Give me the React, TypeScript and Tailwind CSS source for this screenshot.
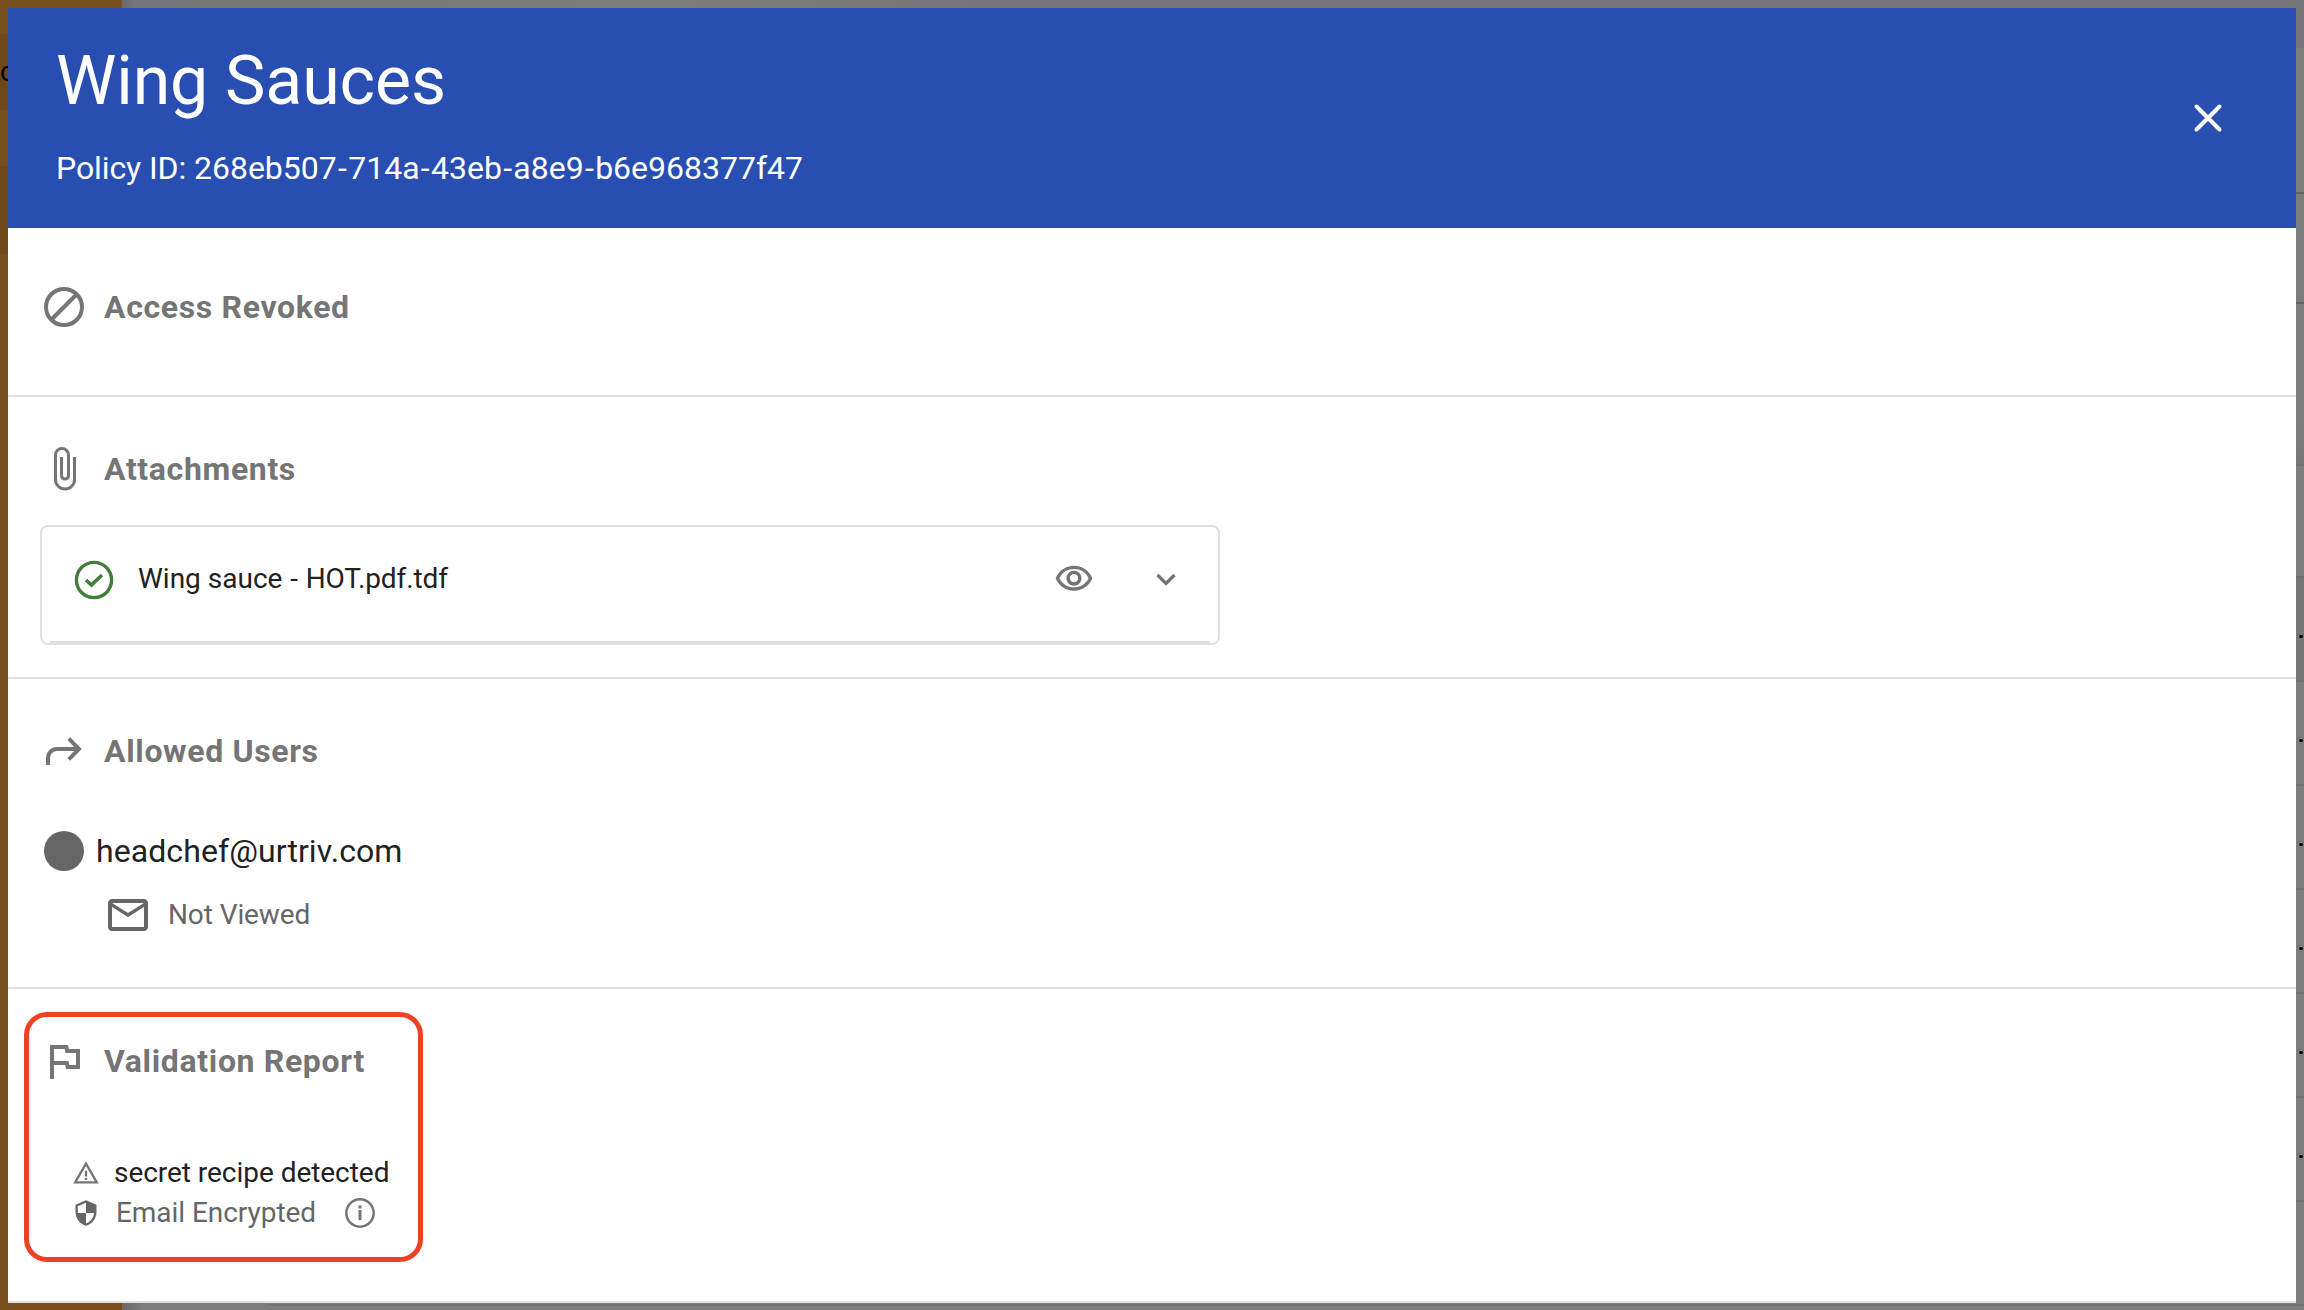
import { Fragment } from "react"
import type { ReactNode } from "react"
import { MdOutlineFlag, MdOutlineMail, MdOutlineVisibility, MdSecurity, MdWarningAmber } from "react-icons/md"

const policyId = "268eb507-714a-43eb-a8e9-b6e968377f47"

// Rows of the table behind the dialog
const rows = [
  { id: 1, menu: true, active: true },
  { id: 2, menu: true, active: false },
  { id: 3, menu: true, active: false },
  { id: 4, menu: true, active: false },
  { id: 5, menu: true, active: false },
  { id: 6, menu: true, active: false },
  { id: 7, menu: false, active: false },
]

function Backdrop() {
  return (
    <div className="absolute inset-0 flex bg-[#7e7e7e]">
      <div className="flex w-[122px] flex-col bg-[#794e1e]">
        <div className="h-[34px]" />
        <div className="flex h-[76px] items-center bg-[#6d4819] text-[28px] text-black">
          <span>c</span>
        </div>
        <div className="h-14" />
        <div className="h-[88px] bg-[#6d4819]" />
      </div>
      <div className="flex flex-1 flex-col">
        <div className="flex h-12 shrink-0 bg-[#757478]">
          <div className="h-full w-3 bg-gradient-to-r from-[#656868] to-[#747777]" />
          <div className="h-full w-[1000px] bg-gradient-to-r from-[#747777] via-[#7a7c7a] to-[#757478]" />
        </div>
        <div className="flex flex-1">
          <div className="w-[146px] bg-gradient-to-r from-[#6a6a6c] via-[#7d7d7f] via-15% to-[#7d7d7f]" />
          <div className="flex flex-1 flex-col">
            <div className="h-[144px] shrink-0 bg-[#7c7e7e]" />
            <div className="h-[110px] shrink-0 border-t-2 border-[#636363] bg-[#7c7e7e]" />
            <div className="h-[162px] shrink-0 border-t-2 border-[#636363] bg-gradient-to-b from-[#7c7e7e] from-75% to-[#757678]" />
            <div className="h-[112px] shrink-0 border-t-2 border-[#707070]" />
            {rows.map((row) => (
              <div
                key={row.id}
                className={`flex h-[104px] shrink-0 items-center justify-end border-t-2 border-[#707070] ${row.active ? "bg-[#757679]" : ""}`}
              >
                {row.menu && <span className="mt-[15px] mr-[1px] h-[3px] w-1 rounded-full bg-black" />}
              </div>
            ))}
            <div className="border-t-2 border-[#707070]" />
          </div>
        </div>
      </div>
    </div>
  )
}

function Section({ icon, title, className, children }: { icon: ReactNode; title: string; className: string; children?: ReactNode }) {
  return (
    <section className={`shrink-0 border-b-2 border-[#e0e0e0] ${className}`}>
      <div className="flex h-12 items-center pl-8">
        <div className="flex w-12 shrink-0 justify-center text-[#757575]">{icon}</div>
        <h2 className="ml-4 text-[32px] leading-[48px] font-bold tracking-[0.65px] text-[#757575]">{title}</h2>
      </div>
      {children}
    </section>
  )
}

export default function App() {
  return (
    <div className="relative h-[1310px] w-[2304px] overflow-hidden p-2 font-['Roboto',sans-serif]">
      <Backdrop />
      <div className="relative flex h-[1295px] w-[2288px] flex-col bg-white">
        <header className="flex h-[220px] shrink-0 justify-between bg-[#284eb1] pl-12 text-white">
          <div className="pt-[33px]">
            <h1 className="text-[68px] leading-[80px] tracking-[-0.1px]">Wing Sauces</h1>
            <p className="mt-[27px] text-[32px] leading-[40px]">
              <span className="tracking-[-0.1px]">Policy ID: </span>
              {policyId.split("-").map((part, index) => (
                <Fragment key={part}>
                  {index > 0 && <span className="px-[1.3px]">-</span>}
                  {part}
                </Fragment>
              ))}
            </p>
          </div>
          <button className="mt-[94px] mr-[72px] h-8 w-8">
            <svg viewBox="0 0 32 32" className="h-8 w-8" fill="none" stroke="currentColor" strokeWidth="4" strokeLinecap="round">
              <path d="M4.5 4.5 27.5 27.5M27.5 4.5 4.5 27.5" />
            </svg>
          </button>
        </header>

        <Section
          title="Access Revoked"
          className="h-[169px] pt-[55px]"
          icon={
            <svg viewBox="0 0 40 40" className="h-10 w-10" fill="none" stroke="currentColor" strokeWidth="4">
              <circle cx="20" cy="20" r="18" />
              <path d="M7.5 32.5 32.5 7.5" />
            </svg>
          }
        />

        <Section
          title="Attachments"
          className="h-[282px] pt-[48px]"
          icon={
            <svg viewBox="0 0 24 44" className="h-11 w-6" fill="none" stroke="currentColor" strokeWidth="3">
              <path d="M22.5 10v22.5a9.5 9.5 0 0 1-19 0V8a6.5 6.5 0 0 1 13 0v20.6a3.5 3.5 0 0 1-7 0V10" />
            </svg>
          }
        >
          <div className="mt-[32px] ml-8 h-[120px] w-[1180px] rounded-lg border-2 border-[#e0e0e0] px-2">
            <div className="flex h-[116px] items-start border-b-2 border-[#e0e0e0] pt-[32px] pr-8 pl-6">
              <svg viewBox="0 0 40 40" className="mt-[1px] h-10 w-10 text-[#437d3c]" fill="none" stroke="currentColor" strokeWidth="3.4">
                <circle cx="20" cy="20" r="17.6" />
                <path d="m12 20 5.5 5L28 15" strokeWidth="3.6" />
              </svg>
              <span className="ml-6 text-[28px] leading-[40px] text-[#212121]">
                Wing sauce <span className="px-[0.8px]">-</span> <span className="tracking-[-0.1px]">HOT.pdf.tdf</span>
              </span>
              <div className="ml-auto flex h-10 items-center text-[#757575]">
                <MdOutlineVisibility className="h-10 w-10" />
                <svg viewBox="0 0 24 24" className="ml-[60px] h-6 w-6" fill="none" stroke="currentColor" strokeWidth="3.2">
                  <path d="m3.5 8 8.5 8.5L20.5 8" />
                </svg>
              </div>
            </div>
          </div>
        </Section>

        <Section
          title="Allowed Users"
          className="h-[310px] pt-12"
          icon={
            <svg viewBox="0 0 40 40" className="h-10 w-10" fill="none" stroke="currentColor" strokeWidth="4">
              <path d="M4 34v-7a9 9 0 0 1 9-9h22M24.8 7.7 35 18 24.8 28.3" />
            </svg>
          }
        >
          <div className="mt-[52px] flex h-12 items-center pl-9">
            <span className="h-10 w-10 rounded-full bg-[#666666]" />
            <span className="ml-3 text-[32px] leading-[48px] tracking-[0.08px] text-[#212121]">headchef@urtriv.com</span>
          </div>
          <div className="mt-4 flex h-12 items-center pl-24 text-[#666666]">
            <MdOutlineMail className="h-12 w-12" />
            <span className="ml-4 text-[28px] tracking-[-0.1px]">Not Viewed</span>
          </div>
        </Section>

        <Section title="Validation Report" className="flex-1 pt-12" icon={<MdOutlineFlag className="h-12 w-12" />}>
          <div className="mt-[68px] flex h-10 items-center pl-16">
            <MdWarningAmber className="h-7 w-7 text-[#757575]" />
            <span className="ml-[14px] text-[28px] tracking-[-0.04px] text-[#212121]">secret recipe detected</span>
          </div>
          <div className="flex h-10 items-center pl-16 text-[#666666]">
            <MdSecurity className="h-7 w-7" />
            <span className="ml-4 w-[200px] text-[28px] tracking-[-0.05px] whitespace-nowrap">Email Encrypted</span>
            <svg viewBox="0 0 32 32" className="ml-7 h-8 w-8 text-[#757575]" fill="none" stroke="currentColor">
              <circle cx="16" cy="16" r="13.7" strokeWidth="2.5" />
              <path d="M16 13v10M16 8.5v3" strokeWidth="3" />
            </svg>
          </div>
        </Section>

        {/* Highlight around the validation report */}
        <div className="absolute top-[1004px] left-[16px] h-[250px] w-[399px] rounded-[23px] border-[5px] border-[#ee4123]" />
      </div>
    </div>
  )
}
